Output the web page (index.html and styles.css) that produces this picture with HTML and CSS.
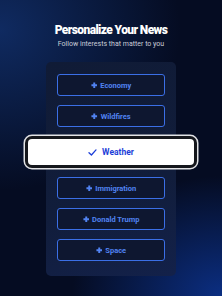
FILE: index.html
```html
<!DOCTYPE html>
<html>
<head>
<meta charset="utf-8">
<link rel="stylesheet" href="styles.css">
</head>
<body>
<div class="screen">
  <header class="head">
    <h1 class="title">Personalize Your News</h1>
    <p class="sub">Follow interests that matter to you</p>
  </header>
  <section class="card">
    <button class="topic"><svg class="plus" viewBox="0 0 6 6"><path d="M3 0.4v5.2M0.4 3h5.2"/></svg>Economy</button>
    <button class="topic"><svg class="plus" viewBox="0 0 6 6"><path d="M3 0.4v5.2M0.4 3h5.2"/></svg>Wildfires</button>
    <button class="topic selected"><svg class="check" viewBox="0 0 10 8"><path d="M1 4.2l2.8 2.7L9 1"/></svg>Weather</button>
    <button class="topic"><svg class="plus" viewBox="0 0 6 6"><path d="M3 0.4v5.2M0.4 3h5.2"/></svg>Immigration</button>
    <button class="topic"><svg class="plus" viewBox="0 0 6 6"><path d="M3 0.4v5.2M0.4 3h5.2"/></svg>Donald Trump</button>
    <button class="topic"><svg class="plus" viewBox="0 0 6 6"><path d="M3 0.4v5.2M0.4 3h5.2"/></svg>Space</button>
  </section>
</div>
</body>
</html>
```
FILE: styles.css
```css
html, body {
  margin: 0;
  padding: 0;
}
body {
  width: 222px;
  height: 296px;
  overflow: hidden;
  font-family: Roboto, "Liberation Sans", sans-serif;
  background:
    radial-gradient(ellipse 150px 120px at 222px 296px, rgba(12, 50, 140, 0.9), rgba(12, 50, 140, 0) 100%),
    radial-gradient(ellipse 180px 160px at 0px 30px, rgba(16, 44, 100, 0.95), rgba(16, 44, 100, 0) 100%),
    #050c22;
}
.screen {
  display: flex;
  flex-direction: column;
  align-items: center;
  padding-top: 22px;
}
.head {
  display: flex;
  flex-direction: column;
  align-items: center;
}
.title {
  margin: 0;
  font-size: 12px;
  line-height: 17px;
  font-weight: 900;
  letter-spacing: -0.6px;
  color: #ffffff;
}
.sub {
  margin: 0;
  font-size: 7px;
  line-height: 10px;
  color: #c9cdd8;
}
.card {
  margin-top: 13px;
  width: 108px;
  padding: 12px 11px 15px;
  border-radius: 5px;
  background: linear-gradient(160deg, #101b36 0%, #111d3b 60%, #13214a 100%);
  display: flex;
  flex-direction: column;
  gap: 9px;
}
.topic {
  height: 22px;
  box-sizing: border-box;
  border: 1.5px solid #3b6fe6;
  border-radius: 3px;
  background: #0e1730;
  color: #5183f2;
  font-family: Roboto, "Liberation Sans", sans-serif;
  font-size: 7.5px;
  font-weight: 700;
  display: flex;
  align-items: center;
  justify-content: center;
  gap: 3px;
  padding: 0;
}
.plus {
  width: 6.5px;
  height: 6.5px;
  fill: none;
  stroke: #5183f2;
  stroke-width: 1.8;
}
.selected {
  height: 26px;
  margin: 3px -29px;
  border: none;
  border-radius: 4px;
  background: #ffffff;
  color: #1c3ed8;
  font-size: 8.5px;
  gap: 5px;
  box-shadow: 0 0 0 3px #15171c, 0 0 0 4.5px #e2e3e6;
}
.check {
  width: 9px;
  height: 7px;
  fill: none;
  stroke: #1c3ed8;
  stroke-width: 1.5;
  stroke-linecap: round;
  stroke-linejoin: round;
}
```
